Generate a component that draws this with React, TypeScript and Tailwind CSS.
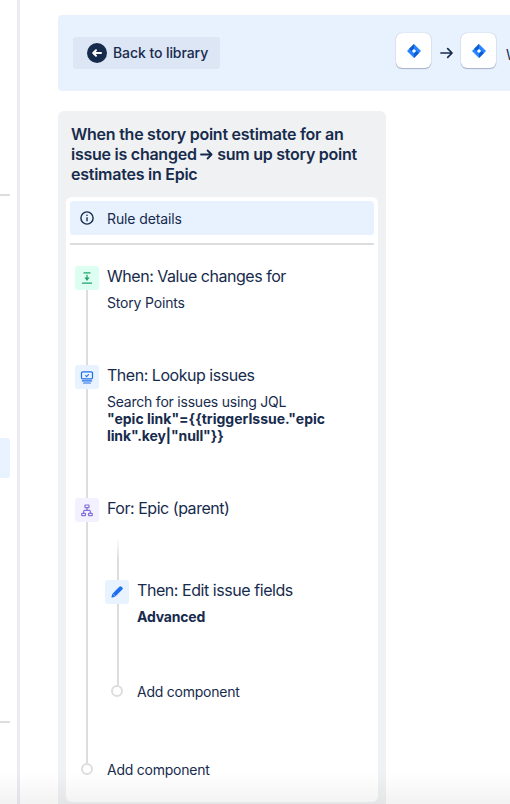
import type { ReactNode } from "react";
import { clsx } from "clsx";

function JiraMark() {
  return (
    <svg viewBox="0 0 14 14" className="h-3.5 w-3.5">
      <path d="M7 0 14 7 7 14 0 7Z" fill="#2684ff" />
      <path d="M7 0v4.6L4.6 7 2.2 4.8Z" fill="#0f5bd0" />
      <path d="M7 14V9.4L9.4 7l2.4 2.2Z" fill="#0f5bd0" />
      <path d="M7 4.9 9.1 7 7 9.1 4.9 7Z" fill="#fff" />
    </svg>
  );
}

function ProductTile() {
  return (
    <div className="flex h-[35px] w-[35px] items-center justify-center rounded-md bg-white shadow-[0_1px_1px_rgba(9,30,66,0.28),0_0_1px_rgba(9,30,66,0.35)]">
      <JiraMark />
    </div>
  );
}

const TriggerIcon = (
  <svg viewBox="0 0 12 12" className="h-3 w-3" fill="none" stroke="#22a06b" strokeWidth="1.2" strokeLinecap="round">
    <path d="M3 .9h6M6 3.2v4.6M1.5 11.2h9" />
    <path d="M4.1 6.1 6 8.3l1.9-2.2Z" fill="#22a06b" strokeWidth=".7" strokeLinejoin="round" />
  </svg>
);

const LookupIcon = (
  <svg viewBox="0 0 14 13" className="h-[13px] w-3.5" fill="none" stroke="#1d6fe8" strokeWidth="1.2" strokeLinecap="round" strokeLinejoin="round">
    <rect x="1.5" y=".9" width="11" height="7" rx="1.2" />
    <path d="m5.6 4.7 1 .9 1.9-2" strokeWidth="1.1" />
    <path d="M2.3 9.9h9.4M3.6 12h6.8" />
  </svg>
);

const BranchIcon = (
  <svg viewBox="0 0 12 13" className="h-[13px] w-3" fill="none" stroke="#8270db" strokeWidth="1.2" strokeLinejoin="round">
    <rect x="4" y="1" width="4" height="2.6" rx=".6" />
    <rect x=".7" y="9.3" width="3.8" height="2.4" rx=".6" />
    <rect x="7.5" y="9.3" width="3.8" height="2.4" rx=".6" />
    <path d="M6 3.8v2.5M2.7 9.1V7.3q0-1 1-1h4.6q1 0 1 1v1.8" />
  </svg>
);

const EditIcon = (
  <svg viewBox="0 0 12 12" className="h-3 w-3" fill="#1d6ff2">
    <path d="M7.6 1.4 8.4.7a1.5 1.5 0 0 1 2.1 0l.8.8a1.5 1.5 0 0 1 0 2.1L4.6 10.3 1.7 7.4Z" />
    <path d="m1.5 7.6 2.9 2.9-3.1 1a.6.6 0 0 1-.8-.8Z" />
  </svg>
);

function Step({
  icon,
  tint,
  title,
  nested,
  className,
  children,
}: {
  icon: ReactNode;
  tint: string;
  title: string;
  nested?: boolean;
  className?: string;
  children?: ReactNode;
}) {
  return (
    <div className={clsx("flex gap-2", className)}>
      <div className="flex w-6 shrink-0 flex-col">
        <div className={clsx("flex h-6 w-6 shrink-0 items-center justify-center rounded-[3px]", tint)}>{icon}</div>
        <div className={clsx("w-0.5 flex-1 bg-[#dcdddf]", nested ? "ml-3" : "ml-[11px]")} />
      </div>
      <div className="min-w-0 flex-1">
        <h3 className={clsx("text-base leading-5 whitespace-nowrap", nested ? "tracking-[-0.44px]" : "tracking-[-0.47px]")}>
          {title}
        </h3>
        {children}
      </div>
    </div>
  );
}

function AddComponent() {
  return (
    <div className="flex items-start gap-2">
      <div className="flex w-6 justify-center">
        <div className="h-3 w-3 rounded-full border-2 border-[#dcdddf] bg-white" />
      </div>
      <span className="text-sm leading-[14px] tracking-[-0.24px]">Add component</span>
    </div>
  );
}

export default function App() {
  return (
    <div className="relative flex h-[804px] w-[510px] overflow-hidden bg-white font-['Inter',sans-serif] text-[#172b4d]">
      <aside className="w-5 shrink-0 border-r-[3px] border-[#ebecf0] pt-[194px]">
        <div className="h-0.5 w-2.5 bg-[#dcdddf]" />
        <div className="mt-[242px] h-10 w-2.5 rounded-r-[3px] bg-[#e9f2ff]" />
        <div className="mt-[243px] h-0.5 w-2.5 bg-[#dcdddf]" />
      </aside>

      <main className="flex min-w-0 flex-1 flex-col pt-[15px] pl-[38px]">
        <header className="flex h-19 shrink-0 items-center overflow-hidden rounded-l-[4px] bg-[#e8f2ff] pl-[15px]">
          <button type="button" className="flex h-8 w-[147px] shrink-0 items-center rounded-[3px] bg-[#dce6f4] pl-3.5">
            <svg viewBox="0 0 20 20" className="h-5 w-5" fill="none">
              <circle cx="10" cy="10" r="10" fill="#172b4d" />
              <path d="M14 10H6.3M9 7.2 6.2 10 9 12.8" stroke="#fff" strokeWidth="2" strokeLinecap="round" strokeLinejoin="round" />
            </svg>
            <span className="ml-1.5 text-sm font-medium tracking-[-0.08px] whitespace-nowrap">Back to library</span>
          </button>
          <div className="-mt-[5px] ml-[176px] flex shrink-0 items-center">
            <ProductTile />
            <svg
              viewBox="0 0 14 12"
              className="mt-[5px] mr-2 ml-[9px] h-3 w-[13px]"
              fill="none"
              stroke="currentColor"
              strokeWidth="1.8"
              strokeLinecap="round"
              strokeLinejoin="round"
            >
              <path d="M1 6h12M8.3 1.3 13 6l-4.7 4.7" />
            </svg>
            <ProductTile />
            <span className="mt-[9px] ml-2.5 text-sm whitespace-nowrap">When</span>
          </div>
        </header>

        <section className="mt-5 flex w-[328px] flex-1 flex-col rounded-t-md bg-[#f0f1f2] px-2 pt-[13px] pb-0.5">
          <h2 className="pl-[5px] text-base leading-5 font-semibold tracking-[-0.25px] whitespace-nowrap">
            When the story point estimate for an
            <br />
            issue is changed{" "}
            <svg
              viewBox="0 0 13 11"
              className="inline h-[11px] w-[13px] align-[0px]"
              fill="none"
              stroke="currentColor"
              strokeWidth="1.8"
              strokeLinecap="round"
              strokeLinejoin="round"
            >
              <path d="M1 5.5h10.6M7.6 1.5l4 4-4 4" />
            </svg>{" "}
            sum up story point
            <br />
            estimates in Epic
          </h2>

          <div className="mt-[13px] flex-1 rounded-md bg-white p-1">
            <div className="flex h-[34px] items-center rounded-[3px] bg-[#e8f2ff] pl-2.5 text-sm tracking-[-0.12px]">
              <svg viewBox="0 0 14 14" className="mr-[13px] h-3.5 w-3.5" fill="none" stroke="currentColor" strokeWidth="1.4">
                <circle cx="7" cy="7" r="6.1" />
                <path d="M7 6.2v4" />
                <circle cx="7" cy="4.2" r=".8" fill="currentColor" stroke="none" />
              </svg>
              <span className="mt-0.5">Rule details</span>
            </div>
            <hr className="mt-2 border-t-2 border-[#dcdddf]" />

            <div className="mt-[21px] pl-[5px]">
              <Step icon={TriggerIcon} tint="bg-[#dcfff1]" title="When: Value changes for" className="h-[99px]">
                <p className="mt-2 text-sm leading-[17px] tracking-[-0.18px]">Story Points</p>
              </Step>
              <Step icon={LookupIcon} tint="bg-[#e9f2ff]" title="Then: Lookup issues" className="h-[133px]">
                <p className="mt-2 text-sm leading-[17px] tracking-[-0.22px] whitespace-nowrap">
                  Search for issues using JQL
                  <br />
                  <strong className="font-bold tracking-normal">
                    "epic link"={"{{"}triggerIssue."epic
                    <br />
                    <span className="tracking-[-0.12px]">link".key|"null"{"}}"}</span>
                  </strong>
                </p>
              </Step>
              <Step icon={BranchIcon} tint="bg-[#f3f0ff]" title="For: Epic (parent)" className="h-[265px]">
                <div className="mt-5 -ml-0.5">
                  <div className="ml-3 h-[42px] w-0.5 bg-linear-to-b from-transparent to-[#dcdddf] to-50%" />
                  <Step icon={EditIcon} tint="bg-[#e9f2ff]" title="Then: Edit issue fields" nested className="h-[105px]">
                    <p className="mt-2 text-sm leading-[17px] font-bold tracking-[-0.2px]">Advanced</p>
                  </Step>
                  <AddComponent />
                </div>
              </Step>
              <AddComponent />
            </div>
          </div>
        </section>
      </main>

      <div className="pointer-events-none absolute inset-x-0 bottom-0 h-8 bg-linear-to-b from-transparent to-black/5" />
    </div>
  );
}
